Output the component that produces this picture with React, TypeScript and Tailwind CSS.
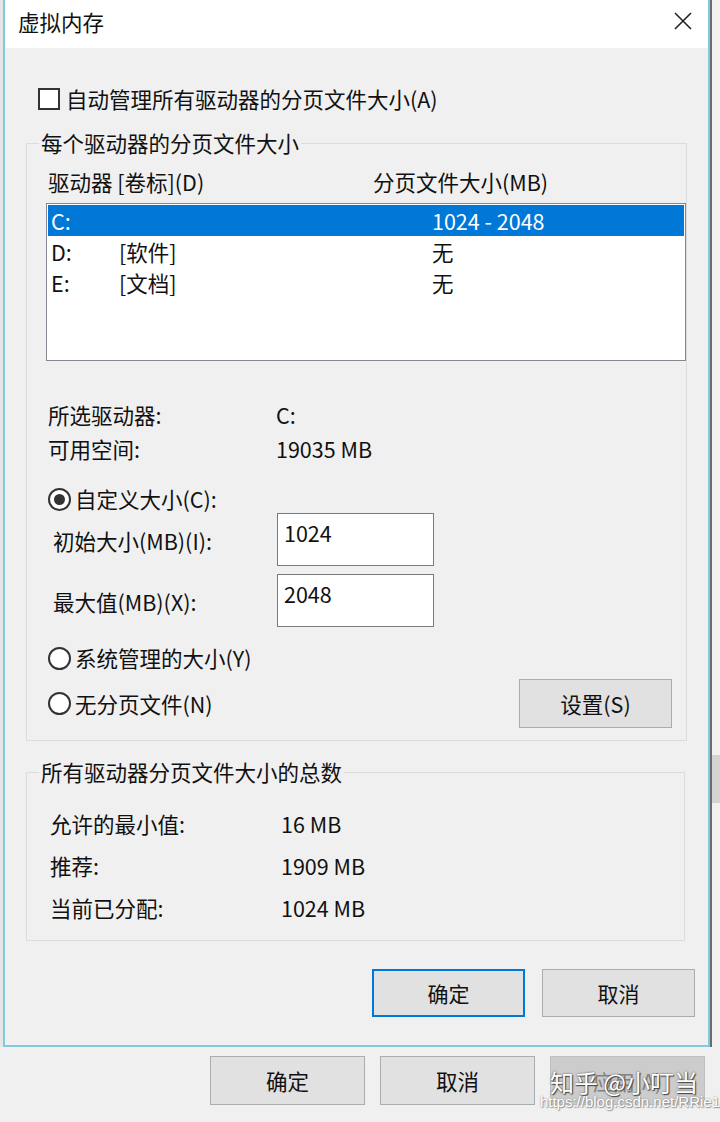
import React from "react";

const font = { fontFamily: '"Noto Sans CJK SC", "Noto Sans", sans-serif' };

const Radio = ({ checked }: { checked?: boolean }) => (
  <span className="flex h-[23px] w-[23px] shrink-0 items-center justify-center rounded-full border-2 border-[#333] bg-white">
    {checked && <span className="h-[11px] w-[11px] rounded-full bg-[#333]" />}
  </span>
);

const Btn = ({
  label,
  primary,
  disabled,
}: {
  label: string;
  primary?: boolean;
  disabled?: boolean;
}) => (
  <div
    className={
      primary
        ? "flex h-[48px] w-[153px] items-center justify-center border-2 border-[#0078d7] bg-[#e1e1e1] text-[21px]"
        : disabled
        ? "flex h-[49px] w-[155px] items-center justify-center border border-[#bfbfbf] bg-[#cccccc] text-[21px] text-[#838383]"
        : "flex h-[48px] w-[153px] items-center justify-center border border-[#adadad] bg-[#e1e1e1] text-[21px]"
    }
  >
    {label}
  </div>
);

export default function App() {
  const drives = [
    { d: "C:", label: "", size: "1024 - 2048", sel: true },
    { d: "D:", label: "[软件]", size: "无" },
    { d: "E:", label: "[文档]", size: "无" },
  ];

  return (
    <div
      className="relative flex h-[1122px] w-[720px] flex-col overflow-hidden bg-[#f0f0f0] text-[21.5px] leading-[26px] text-[#111]"
      style={font}
    >
      <div className="flex h-[1047px]">
        <div className="w-[3px] bg-[#e6e6e6]" />

        {/* dialog */}
        <div className="flex w-[707px] flex-col border-x-2 border-b-2 border-[#7fcadd]">
          {/* title bar */}
          <div className="flex h-[48px] items-center justify-between bg-white pb-[4px] pl-[13px] pr-[16px]">
            <span className="text-[21.5px]">虚拟内存</span>
            <svg width="18" height="18" viewBox="0 0 18 18" className="mt-[-2px]">
              <path d="M1 1L17 17M17 1L1 17" stroke="#222" strokeWidth="1.6" fill="none" />
            </svg>
          </div>

          {/* body */}
          <div className="flex flex-1 flex-col bg-[#f0f0f0]">
            <div className="ml-[33px] mt-[40px] flex h-[22px] items-center gap-[6px]">
              <span className="h-[22px] w-[22px] border-2 border-[#333] bg-white" />
              <span>自动管理所有驱动器的分页文件大小(A)</span>
            </div>

            <fieldset className="ml-[21px] mt-[20px] w-[659px] border border-[#dcdcdc] pb-[12px]">
              <legend className="ml-[12px] px-[2px]">每个驱动器的分页文件大小</legend>

              <div className="ml-[21px] mt-[13px] flex">
                <span className="w-[325px]">驱动器 [卷标](D)</span>
                <span>分页文件大小(MB)</span>
              </div>

              <div className="ml-[19px] mt-[8px] h-[158px] w-[640px] border border-[#828790] bg-white p-[1px]">
                {drives.map((r) => (
                  <div
                    key={r.d}
                    className={
                      r.sel
                        ? "flex h-[31px] items-center bg-[#0078d7] pl-[3px] text-white"
                        : "flex h-[31px] items-center pl-[3px]"
                    }
                  >
                    <span className="w-[68px]">{r.d}</span>
                    <span className="w-[313px]">{r.label}</span>
                    <span>{r.size}</span>
                  </div>
                ))}
              </div>

              <div className="ml-[21px] mt-[37px] flex h-[34px] items-center">
                <span className="w-[228px]">所选驱动器:</span>
                <span>C:</span>
              </div>
              <div className="ml-[21px] flex h-[34px] items-center">
                <span className="w-[228px]">可用空间:</span>
                <span>19035 MB</span>
              </div>

              <div className="ml-[21px] mt-[21px] flex h-[24px] items-center gap-[4px]">
                <Radio checked />
                <span>自定义大小(C):</span>
              </div>

              <div className="ml-[26px] mt-[2px] flex items-center">
                <span className="w-[224px] pt-[3px]">初始大小(MB)(I):</span>
                <div className="h-[53px] w-[157px] border border-[#7a7a7a] bg-white px-[6px] pt-[6px]">
                  1024
                </div>
              </div>
              <div className="ml-[26px] mt-[8px] flex items-center">
                <span className="w-[224px] pt-[3px]">最大值(MB)(X):</span>
                <div className="h-[53px] w-[157px] border border-[#7a7a7a] bg-white px-[6px] pt-[6px]">
                  2048
                </div>
              </div>

              <div className="ml-[21px] mt-[19px] flex h-[24px] items-center gap-[4px]">
                <Radio />
                <span>系统管理的大小(Y)</span>
              </div>

              <div className="ml-[21px] mr-[14px] mt-[9px] flex items-center justify-between">
                <div className="flex h-[24px] items-center gap-[4px]">
                  <Radio />
                  <span>无分页文件(N)</span>
                </div>
                <div className="flex h-[49px] w-[153px] items-center justify-center border border-[#adadad] bg-[#e1e1e1]">
                  设置(S)
                </div>
              </div>
            </fieldset>

            <fieldset className="ml-[21px] mt-[18px] w-[659px] border border-[#dcdcdc] pb-[11px]">
              <legend className="ml-[12px] px-[2px]">所有驱动器分页文件大小的总数</legend>
              {[
                ["允许的最小值:", "16 MB"],
                ["推荐:", "1909 MB"],
                ["当前已分配:", "1024 MB"],
              ].map(([k, v], i) => (
                <div
                  key={k}
                  className={
                    i === 0
                      ? "ml-[23px] mt-[18px] flex h-[42px] items-center"
                      : "ml-[23px] flex h-[42px] items-center"
                  }
                >
                  <span className="w-[231px]">{k}</span>
                  <span>{v}</span>
                </div>
              ))}
            </fieldset>

            <div className="mr-[13px] mt-[28px] flex justify-end gap-[17px]">
              <Btn label="确定" primary />
              <Btn label="取消" />
            </div>
          </div>
        </div>

        {/* edge of the parent window */}
        <div className="flex flex-1 flex-col border-l-2 border-[#6b6b6b] bg-[#f0f0f0]">
          <div className="mt-[755px] h-[48px] bg-[#d4d4d4]" />
        </div>
      </div>

      {/* parent window buttons */}
      <div className="ml-[210px] mt-[9px] flex gap-[15px]">
        <div className="flex h-[49px] w-[155px] items-center justify-center border border-[#adadad] bg-[#e1e1e1]">
          确定
        </div>
        <div className="flex h-[49px] w-[155px] items-center justify-center border border-[#adadad] bg-[#e1e1e1]">
          取消
        </div>
        <Btn label="应用(A)" disabled />
      </div>

      {/* watermark */}
      <div className="absolute right-[22px] top-[1066px] text-[24px] leading-[32px] text-white [text-shadow:0_0_2px_#444,1px_1px_1px_#444]">
        知乎 @小叮当
      </div>
      <div
        className="absolute right-[0px] top-[1092px] text-[15px] leading-[20px] text-white [text-shadow:0_0_2px_#888,1px_1px_1px_#999]"
        style={{ fontFamily: '"Liberation Sans", sans-serif' }}
      >
        https://blog.csdn.net/RRie1
      </div>
    </div>
  );
}
